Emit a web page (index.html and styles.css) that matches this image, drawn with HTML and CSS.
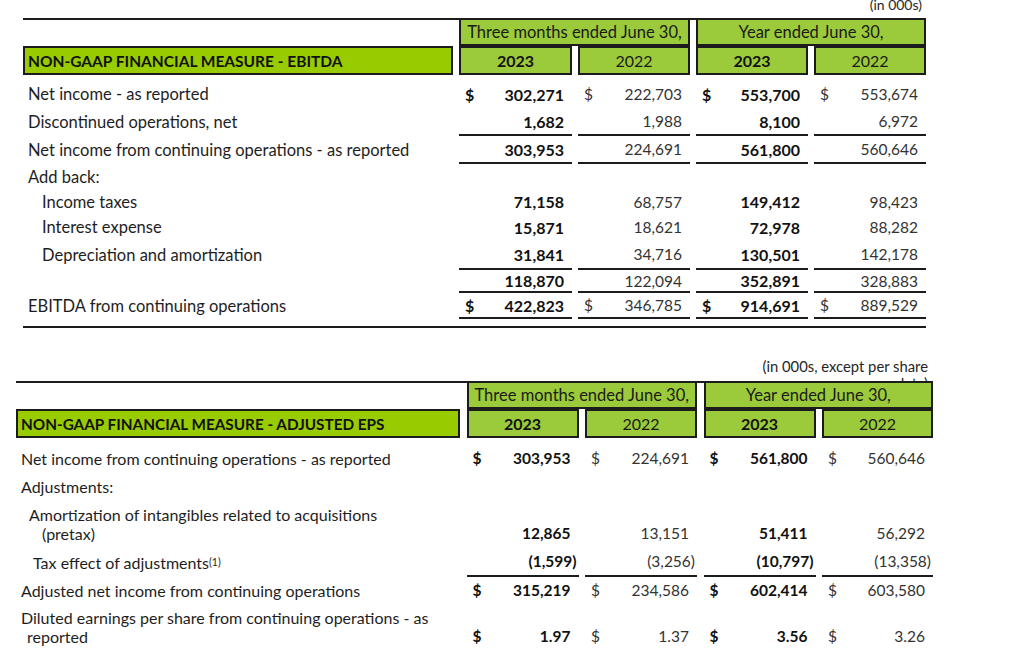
FILE: index.html
```html
<!DOCTYPE html>
<html lang="en">
<head>
<meta charset="utf-8">
<title>Non-GAAP Financial Measures</title>
<link rel="stylesheet" href="styles.css">
</head>
<body>
<section class="tbl t1">
  <div class="note">(in 000s)</div>
  <div class="head">
    <div class="grp q">Three months ended June 30,</div>
    <div class="grp y">Year ended June 30,</div>
    <div class="title">NON-GAAP FINANCIAL MEASURE - EBITDA</div>
    <div class="yr b">2023</div>
    <div class="yr">2022</div>
    <div class="yr b">2023</div>
    <div class="yr">2022</div>
  </div>
  <div class="body">
    <div class="row">
      <div class="lbl">Net income - as reported</div>
      <div class="v b"><span>$</span><span class="n">302,271</span></div>
      <div class="v"><span>$</span><span class="n">222,703</span></div>
      <div class="v b"><span>$</span><span class="n">553,700</span></div>
      <div class="v"><span>$</span><span class="n">553,674</span></div>
    </div>
    <div class="row ul">
      <div class="lbl">Discontinued operations, net</div>
      <div class="v b"><span class="n">1,682</span></div>
      <div class="v"><span class="n">1,988</span></div>
      <div class="v b"><span class="n">8,100</span></div>
      <div class="v"><span class="n">6,972</span></div>
    </div>
    <div class="row ul">
      <div class="lbl">Net income from continuing operations - as reported</div>
      <div class="v b"><span class="n">303,953</span></div>
      <div class="v"><span class="n">224,691</span></div>
      <div class="v b"><span class="n">561,800</span></div>
      <div class="v"><span class="n">560,646</span></div>
    </div>
    <div class="row h25">
      <div class="lbl">Add back:</div>
      <div class="v"></div><div class="v"></div><div class="v"></div><div class="v"></div>
    </div>
    <div class="row h25">
      <div class="lbl in">Income taxes</div>
      <div class="v b"><span class="n">71,158</span></div>
      <div class="v"><span class="n">68,757</span></div>
      <div class="v b"><span class="n">149,412</span></div>
      <div class="v"><span class="n">98,423</span></div>
    </div>
    <div class="row h26">
      <div class="lbl in">Interest expense</div>
      <div class="v b"><span class="n">15,871</span></div>
      <div class="v"><span class="n">18,621</span></div>
      <div class="v b"><span class="n">72,978</span></div>
      <div class="v"><span class="n">88,282</span></div>
    </div>
    <div class="row ul h30">
      <div class="lbl in">Depreciation and amortization</div>
      <div class="v b"><span class="n">31,841</span></div>
      <div class="v"><span class="n">34,716</span></div>
      <div class="v b"><span class="n">130,501</span></div>
      <div class="v"><span class="n">142,178</span></div>
    </div>
    <div class="row ul h23">
      <div class="lbl"></div>
      <div class="v b"><span class="n">118,870</span></div>
      <div class="v"><span class="n">122,094</span></div>
      <div class="v b"><span class="n">352,891</span></div>
      <div class="v"><span class="n">328,883</span></div>
    </div>
    <div class="row ul h26">
      <div class="lbl">EBITDA from continuing operations</div>
      <div class="v b"><span>$</span><span class="n">422,823</span></div>
      <div class="v"><span>$</span><span class="n">346,785</span></div>
      <div class="v b"><span>$</span><span class="n">914,691</span></div>
      <div class="v"><span>$</span><span class="n">889,529</span></div>
    </div>
  </div>
  <div class="rule"></div>
</section>

<section class="tbl t2">
  <div class="note">(in 000s, except per share<br>data)</div>
  <div class="head">
    <div class="grp q">Three months ended June 30,</div>
    <div class="grp y">Year ended June 30,</div>
    <div class="title">NON-GAAP FINANCIAL MEASURE - ADJUSTED EPS</div>
    <div class="yr b">2023</div>
    <div class="yr">2022</div>
    <div class="yr b">2023</div>
    <div class="yr">2022</div>
  </div>
  <div class="body">
    <div class="row">
      <div class="lbl">Net income from continuing operations - as reported</div>
      <div class="v b"><span>$</span><span class="n">303,953</span></div>
      <div class="v"><span>$</span><span class="n">224,691</span></div>
      <div class="v b"><span>$</span><span class="n">561,800</span></div>
      <div class="v"><span>$</span><span class="n">560,646</span></div>
    </div>
    <div class="row">
      <div class="lbl">Adjustments:</div>
      <div class="v"></div><div class="v"></div><div class="v"></div><div class="v"></div>
    </div>
    <div class="row tall">
      <div class="lbl amort">Amortization of intangibles related to acquisitions<br>(pretax)</div>
      <div class="v b"><span class="n">12,865</span></div>
      <div class="v"><span class="n">13,151</span></div>
      <div class="v b"><span class="n">51,411</span></div>
      <div class="v"><span class="n">56,292</span></div>
    </div>
    <div class="row ul h30">
      <div class="lbl tax">Tax effect of adjustments<sup>(1)</sup></div>
      <div class="v b"><span class="n neg">(1,599)</span></div>
      <div class="v"><span class="n neg">(3,256)</span></div>
      <div class="v b"><span class="n neg">(10,797)</span></div>
      <div class="v"><span class="n neg">(13,358)</span></div>
    </div>
    <div class="row h26">
      <div class="lbl">Adjusted net income from continuing operations</div>
      <div class="v b"><span>$</span><span class="n">315,219</span></div>
      <div class="v"><span>$</span><span class="n">234,586</span></div>
      <div class="v b"><span>$</span><span class="n">602,414</span></div>
      <div class="v"><span>$</span><span class="n">603,580</span></div>
    </div>
    <div class="row tall">
      <div class="lbl dil">Diluted earnings per share from continuing operations - as<br>reported</div>
      <div class="v b"><span>$</span><span class="n">1.97</span></div>
      <div class="v"><span>$</span><span class="n">1.37</span></div>
      <div class="v b"><span>$</span><span class="n">3.56</span></div>
      <div class="v"><span>$</span><span class="n">3.26</span></div>
    </div>
  </div>
</section>
</body>
</html>
```

FILE: styles.css
```css
* {
  box-sizing: border-box;
  margin: 0;
  padding: 0;
}

html, body {
  background: #ffffff;
}

body {
  width: 1024px;
  height: 655px;
  overflow: hidden;
  font-family: Lato, "Open Sans", sans-serif;
  color: #1e1e1e;
}

.tbl {
  --cols: 430px 113px 112px 112px 112px;
  --gap: 6px;
  --line: #1c1c1c;
}

.t1 {
  margin-left: 23px;
  width: 903px;
  margin-top: -4px;
  font-size: 16.5px;
}

.t2 {
  --cols: 444px 112px 112px 112px 111px;
  --gap: 6.5px;
  margin-left: 16px;
  width: 917px;
  margin-top: 30px;
  font-size: 16px;
}

.note {
  text-align: right;
  font-size: 14px;
  line-height: 17px;
  color: #262626;
}

.t1 .note {
  height: 17px;
  padding-right: 4px;
  margin-bottom: 5px;
}

.t2 .note {
  height: 34px;
  padding-right: 5px;
  margin-bottom: -11px;
  font-size: 14.8px;
}

.head {
  position: relative;
  display: grid;
  grid-template-columns: var(--cols);
  grid-template-rows: 26px 29px;
  column-gap: var(--gap);
  border-top: 2px solid var(--line);
  color: #1a1a1a;
  font-size: 16.5px;
}

.grp {
  grid-row: 1;
  background: #9bcb3b;
  border: 2px solid var(--line);
  border-top: 0;
  display: flex;
  align-items: center;
  justify-content: center;
}

.grp.q { grid-column: 2 / 4; }
.grp.y { grid-column: 4 / 6; }

.title {
  grid-row: 2;
  grid-column: 1;
  background: #99cc00;
  border: 2px solid var(--line);
  font-weight: 700;
  font-size: 15.5px;
  padding-left: 3px;
  display: flex;
  align-items: center;
  color: #111;
}

.t2 .title { font-size: 15.3px; }

.yr {
  grid-row: 2;
  background: #9bcb3b;
  border: 2px solid var(--line);
  display: flex;
  align-items: center;
  justify-content: center;
  font-size: 16px;
}

.yr.b { font-weight: 700; color: #111; }

.t1 .body { margin-top: 5px; }
.t2 .body { margin-top: 6px; }

.row {
  display: grid;
  grid-template-columns: var(--cols);
  column-gap: var(--gap);
  height: 28px;
}

.row.h23 { height: 23px; }
.row.h25 { height: 25px; }
.row.h26 { height: 26px; }
.row.h30 { height: 30px; }
.row.tall { height: 47px; }

.lbl {
  display: flex;
  align-items: center;
  padding-left: 5px;
  white-space: nowrap;
}

.lbl.in { padding-left: 19px; }

.t2 .lbl { padding-left: 5px; }

.t2 .lbl.amort,
.t2 .lbl.dil {
  display: block;
  align-self: center;
  line-height: 19px;
}

.t2 .lbl.amort {
  padding-left: 26px;
  text-indent: -13px;
}

.t2 .lbl.dil {
  padding-left: 11px;
  text-indent: -6px;
}

.t2 .lbl.tax { padding-left: 17px; }

sup {
  font-size: 10.5px;
  line-height: 0;
  vertical-align: 6px;
}

.v {
  display: flex;
  align-items: center;
  padding: 0 2px 0 6px;
  color: #333;
  font-size: 15.5px;
}

.v.b {
  font-weight: 700;
  color: #111;
}

.t1 .v.b { font-size: 16px; }

.v .n {
  margin-left: auto;
  padding-right: 6px;
}

.v .n.neg { padding-right: 0; }

.row.tall .v {
  align-items: flex-end;
  padding-bottom: 4px;
  line-height: 19px;
}

.ul .v {
  border-bottom: 2px solid var(--line);
}

.rule {
  margin-top: 7px;
  height: 2px;
  background: var(--line);
}
```
